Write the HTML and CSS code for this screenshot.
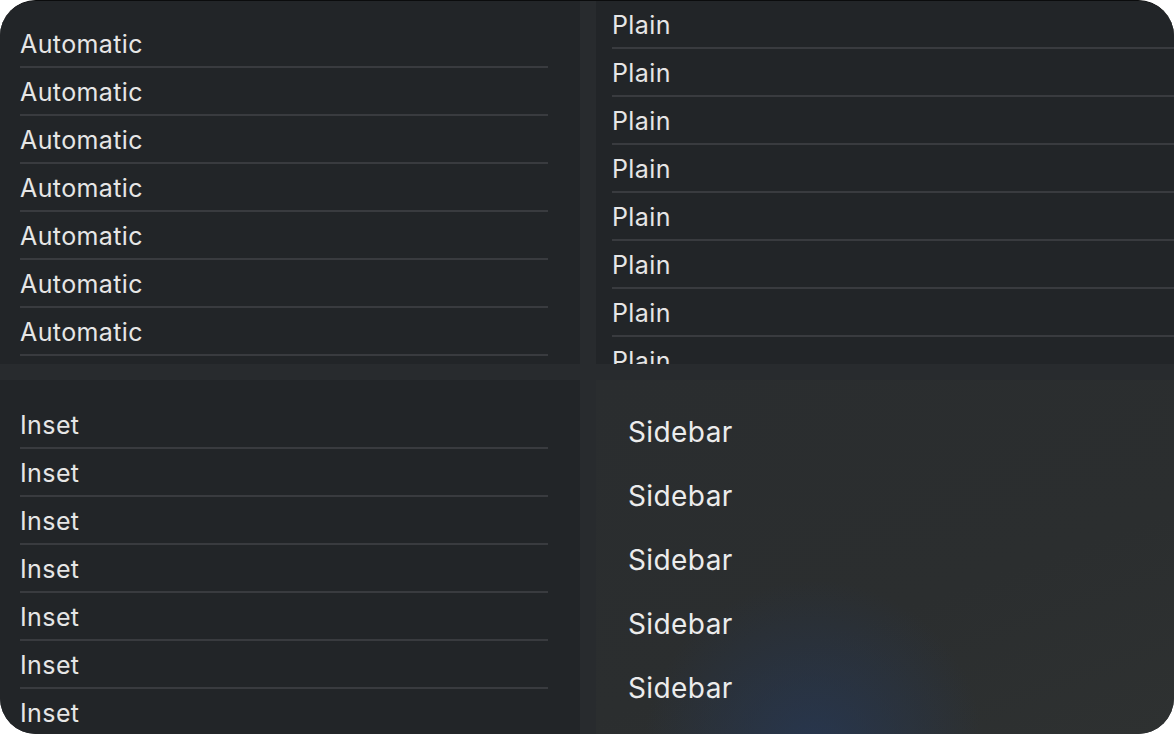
FILE: index.html
```html
<!DOCTYPE html>
<html>
<head>
<meta charset="utf-8">
<link rel="stylesheet" href="styles.css">
</head>
<body>
<div class="window">
  <section class="panel list-auto">
    <div class="row">Automatic</div>
    <div class="row">Automatic</div>
    <div class="row">Automatic</div>
    <div class="row">Automatic</div>
    <div class="row">Automatic</div>
    <div class="row">Automatic</div>
    <div class="row">Automatic</div>
  </section>
  <section class="panel list-plain">
    <div class="row">Plain</div>
    <div class="row">Plain</div>
    <div class="row">Plain</div>
    <div class="row">Plain</div>
    <div class="row">Plain</div>
    <div class="row">Plain</div>
    <div class="row">Plain</div>
    <div class="row">Plain</div>
  </section>
  <section class="panel list-inset">
    <div class="row">Inset</div>
    <div class="row">Inset</div>
    <div class="row">Inset</div>
    <div class="row">Inset</div>
    <div class="row">Inset</div>
    <div class="row">Inset</div>
    <div class="row">Inset</div>
  </section>
  <section class="panel list-sidebar">
    <div class="srow">Sidebar</div>
    <div class="srow">Sidebar</div>
    <div class="srow">Sidebar</div>
    <div class="srow">Sidebar</div>
    <div class="srow">Sidebar</div>
  </section>
</div>
</body>
</html>
```
FILE: styles.css
```css
html, body {
  margin: 0;
  padding: 0;
  background: #ffffff;
}
body {
  width: 1174px;
  height: 734px;
  overflow: hidden;
  font-family: Inter, "Noto Sans", sans-serif;
}
.window {
  width: 1174px;
  height: 734px;
  box-sizing: border-box;
  border-radius: 36px;
  overflow: hidden;
  background: #282b2e;
  border-top: 1px solid #0b0c0d;
  display: grid;
  grid-template-columns: 580px 578px;
  grid-template-rows: 363px 354px;
  column-gap: 16px;
  row-gap: 16px;
}
.panel {
  background: #222528;
  overflow: hidden;
  color: #e6e6e6;
}
.row {
  height: 46px;
  border-bottom: 2px solid #393b3f;
  font-size: 25px;
  line-height: 48px;
  letter-spacing: 0.4px;
}
.list-auto {
  padding: 19px 32px 0 20px;
}
.list-inset {
  padding: 21px 32px 0 20px;
}
.list-plain {
  padding: 0 0 0 16px;
}
.list-sidebar {
  background:
    radial-gradient(ellipse 170px 170px at 218px 370px, rgba(38, 56, 86, 0.8), rgba(38, 56, 86, 0) 100%),
    linear-gradient(160deg, #2a2d2f 0%, #2b2e2f 60%, #2e3131 100%);
  padding: 20px 0 0 32px;
}
.srow {
  height: 64px;
  line-height: 64px;
  font-size: 28px;
  color: #ececec;
  letter-spacing: 0.4px;
}
```
